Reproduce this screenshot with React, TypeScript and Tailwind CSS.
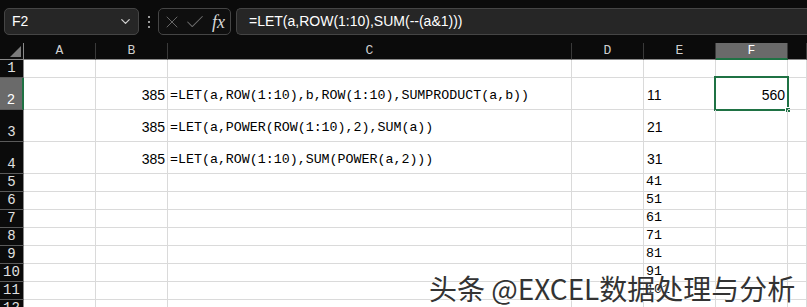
import { X, Check, ChevronDown } from 'lucide-react';

const COLS = ['A', 'B', 'C', 'D', 'E', 'F', 'G'];

type Cell = { text: string; kind: 'num' | 'mono' | 'left' };

const DATA: Record<number, Partial<Record<string, Cell>>> = {
  2: {
    B: { text: '385', kind: 'num' },
    C: { text: '=LET(a,ROW(1:10),b,ROW(1:10),SUMPRODUCT(a,b))', kind: 'mono' },
    E: { text: '11', kind: 'left' },
    F: { text: '560', kind: 'num' },
  },
  3: {
    B: { text: '385', kind: 'num' },
    C: { text: '=LET(a,POWER(ROW(1:10),2),SUM(a))', kind: 'mono' },
    E: { text: '21', kind: 'left' },
  },
  4: {
    B: { text: '385', kind: 'num' },
    C: { text: '=LET(a,ROW(1:10),SUM(POWER(a,2)))', kind: 'mono' },
    E: { text: '31', kind: 'left' },
  },
  5: { E: { text: '41', kind: 'mono' } },
  6: { E: { text: '51', kind: 'mono' } },
  7: { E: { text: '61', kind: 'mono' } },
  8: { E: { text: '71', kind: 'mono' } },
  9: { E: { text: '81', kind: 'mono' } },
  10: { E: { text: '91', kind: 'mono' } },
  11: { E: { text: '101', kind: 'mono' } },
};

const ROWS = [1, 2, 3, 4, 5, 6, 7, 8, 9, 10, 11, 12];

function CellText({ cell }: { cell: Cell }) {
  if (cell.kind === 'num') {
    return (
      <span className="ml-auto pr-[2px] font-['Liberation_Sans',sans-serif] text-[14px] leading-none text-black">
        {cell.text}
      </span>
    );
  }
  if (cell.kind === 'left') {
    return (
      <span className="pl-[3px] font-['Liberation_Sans',sans-serif] text-[14px] leading-none text-black">
        {cell.text}
      </span>
    );
  }
  return (
    <span className="whitespace-nowrap pl-[2px] font-['Liberation_Mono',monospace] text-[13.3px] leading-none text-black">
      {cell.text}
    </span>
  );
}

export default function App() {
  return (
    <div className="relative h-[307px] w-[807px] overflow-hidden bg-[#0b0b0b]">
      {/* formula bar */}
      <div className="flex h-[43px] items-center pl-[4px]">
        <div className="flex h-[27px] w-[135px] items-center rounded-[5px] border border-[#454545] bg-[#262626] pl-[7px] pr-[5px]">
          <span className="font-['Liberation_Sans',sans-serif] text-[14px] text-white">F2</span>
          <ChevronDown className="ml-auto h-[15px] w-[15px] text-[#d0d0d0]" strokeWidth={2} />
        </div>
        <div className="ml-[9px] flex flex-col gap-[3px]">
          <span className="h-[2px] w-[2px] bg-[#9a9a9a]" />
          <span className="h-[2px] w-[2px] bg-[#9a9a9a]" />
          <span className="h-[2px] w-[2px] bg-[#9a9a9a]" />
        </div>
        <div className="ml-[8px] flex h-[27px] w-[73px] items-center rounded-[5px] border border-[#454545] bg-[#0f0f0f] pl-[3px]">
          <X className="h-[20px] w-[20px] text-[#6e6e6e]" strokeWidth={1.1} />
          <Check className="ml-[2px] h-[22px] w-[22px] text-[#6e6e6e]" strokeWidth={1.1} />
          <span className="ml-[6px] font-['Liberation_Serif',serif] text-[18px] italic leading-none text-[#d8d8d8]">
            fx
          </span>
        </div>
        <div className="ml-[5px] flex h-[27px] flex-1 items-center rounded-l-[5px] border border-r-0 border-[#454545] bg-[#262626] pl-[12px]">
          <span className="font-['Liberation_Sans',sans-serif] text-[14px] text-white">
            =LET(a,ROW(1:10),SUM(--(a&amp;1)))
          </span>
        </div>
      </div>

      {/* sheet */}
      <div className="grid grid-cols-[24px_72px_72px_404px_72px_72px_72px_1fr] grid-rows-[17px_18px_32px_32px_32px_18px_18px_18px_18px_18px_18px_18px_18px] bg-white">
        <div className="relative border-b border-r border-[#8a8a8a] bg-[#0b0b0b]">
          <svg className="absolute bottom-[2px] right-[2px]" width="11" height="11" viewBox="0 0 11 11">
            <polygon points="11,0 11,11 0,11" fill="#7a7a7a" />
          </svg>
        </div>
        {COLS.map((c) => (
          <div
            key={c}
            className={
              c === 'F'
                ? "flex items-center justify-center border-b-2 border-r border-b-[#1f7244] border-r-[#3a3a3a] bg-[#6a6a6a] font-['Liberation_Mono',monospace] text-[13px] text-white"
                : "flex items-center justify-center border-b border-r border-b-[#8a8a8a] border-r-[#3a3a3a] bg-[#0b0b0b] font-['Liberation_Mono',monospace] text-[13px] text-[#cfcfcf]"
            }
          >
            {c === 'G' ? '' : c}
          </div>
        ))}

        {ROWS.map((r) => (
          <Row key={r} r={r} />
        ))}
      </div>

      {/* watermark */}
      <div className="absolute left-[429px] top-[274px] whitespace-nowrap font-['Noto_Sans_CJK_SC','Liberation_Sans',sans-serif] text-[28px] leading-none text-[#333333] [text-shadow:0_0_2px_#fff,0_0_2px_#fff]">
        头条 @EXCEL数据处理与分析
      </div>
    </div>
  );
}

function Row({ r }: { r: number }) {
  const row = DATA[r] ?? {};
  const sel = r === 2;
  return (
    <>
      <div
        className={
          sel
            ? "flex items-end justify-center border-b border-r-2 border-b-[#5a5a5a] border-r-[#1f7244] bg-[#6a6a6a] pb-[2px] font-['Liberation_Mono',monospace] text-[14px] leading-none text-white"
            : "flex items-end justify-center border-b border-r border-b-[#5a5a5a] border-r-[#8a8a8a] bg-[#0b0b0b] pb-[2px] font-['Liberation_Mono',monospace] text-[14px] leading-none text-[#e0e0e0]"
        }
      >
        {r}
      </div>
      {COLS.map((c) => {
        const cell = row[c];
        const tall = r >= 2 && r <= 4;
        return (
          <div
            key={c}
            className={
              tall
                ? 'relative flex items-end overflow-visible border-b border-r border-[#dadada] pb-[7px]'
                : 'relative flex items-end overflow-visible border-b border-r border-[#dadada] pb-[3px]'
            }
          >
            {cell && <CellText cell={cell} />}
            {sel && c === 'F' && (
              <div className="absolute -left-[2px] -top-[2px] h-[35px] w-[75px] border-2 border-[#1f7244]">
                <div className="absolute -bottom-[4px] -right-[4px] h-[6px] w-[6px] border border-white bg-[#1f7244]" />
              </div>
            )}
          </div>
        );
      })}
    </>
  );
}
